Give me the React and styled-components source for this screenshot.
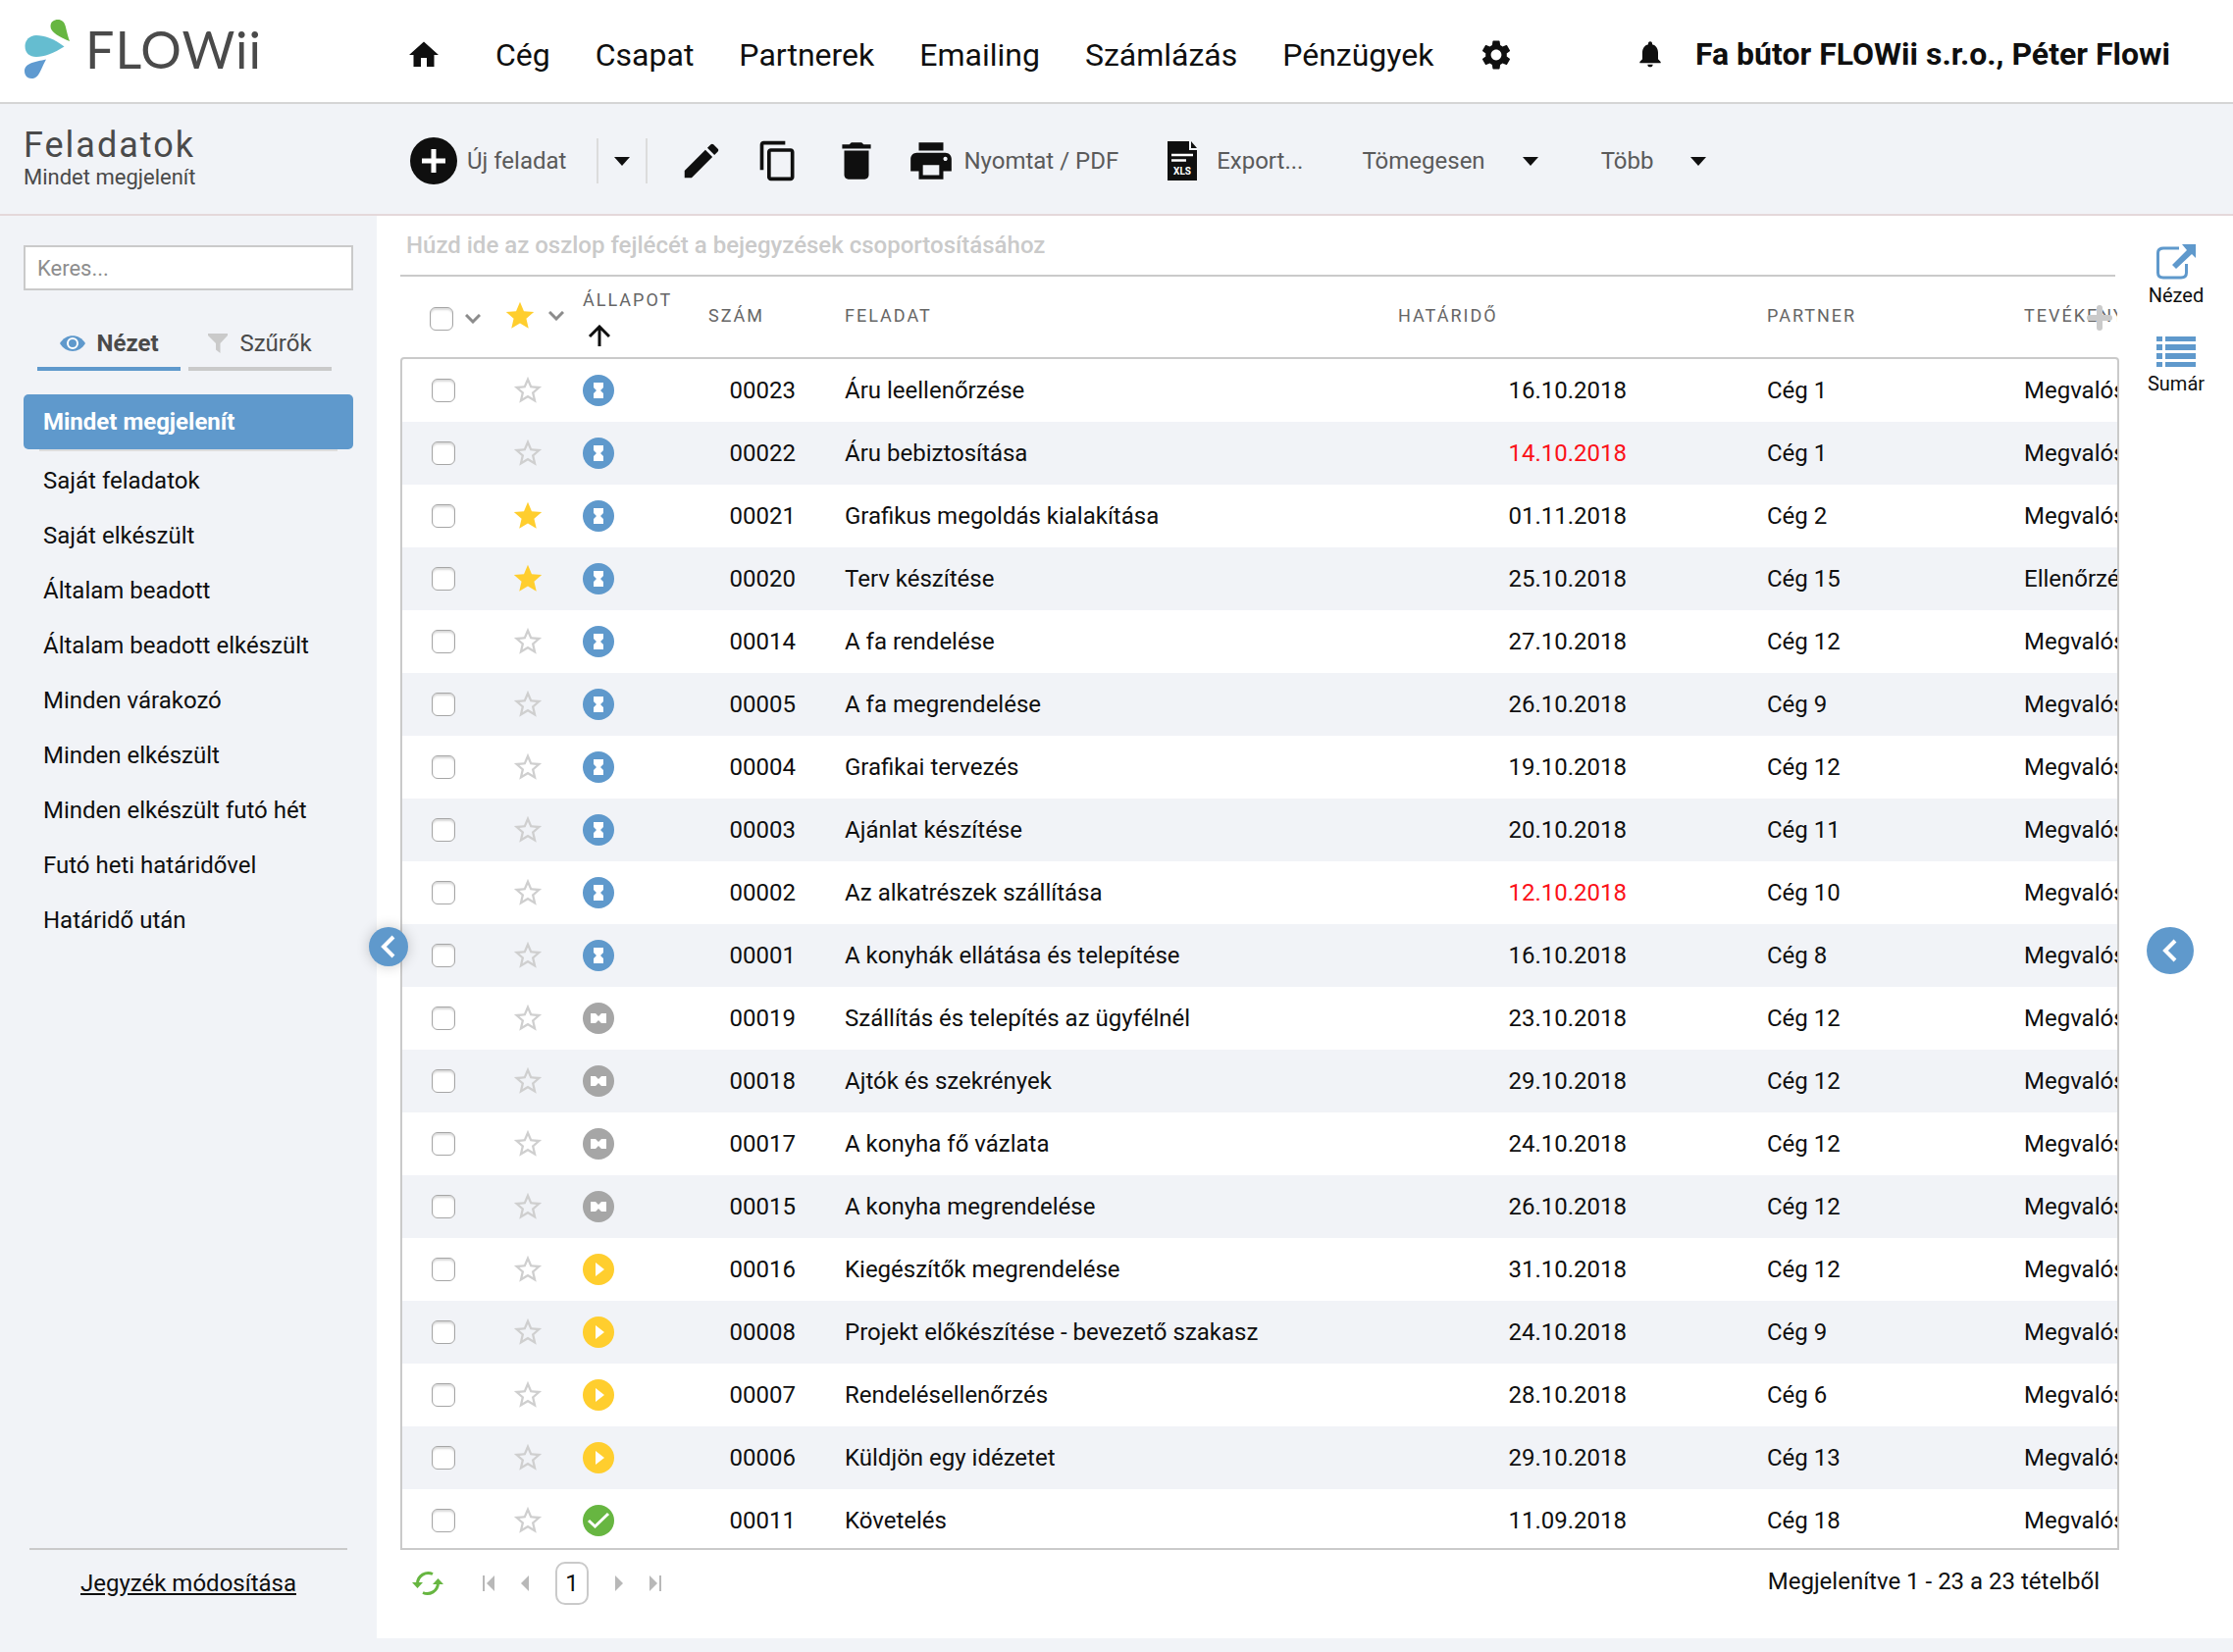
import React, { useState } from "react";
import styled, { createGlobalStyle } from "styled-components";
import {
  MdContentCopy,
  MdDelete,
  MdEdit,
  MdHome,
  MdNotifications,
  MdPrint,
  MdSettings,
  MdStar,
  MdStarBorder,
} from "react-icons/md";

const Colors = {
  blue: "#5f99cc",
  green: "#67b641",
  yellow: "#ffce2e",
  gray: "#a6a6a6",
  line: "#cacaca",
  panel: "#f1f3f7",
  text: "#0f0f0f",
  darkGray: "#4a4a4a",
  red: "#fb1018",
};

const NavItems = [
  "Cég",
  "Csapat",
  "Partnerek",
  "Emailing",
  "Számlázás",
  "Pénzügyek",
];

const Views = [
  "Mindet megjelenít",
  "Saját feladatok",
  "Saját elkészült",
  "Általam beadott",
  "Általam beadott elkészült",
  "Minden várakozó",
  "Minden elkészült",
  "Minden elkészült futó hét",
  "Futó heti határidővel",
  "Határidő után",
];

const work = "Megvalósítás";

const Tasks = [
  { id: "00023", status: "waiting", name: "Áru leellenőrzése", date: "16.10.2018", partner: "Cég 1", type: work },
  { id: "00022", status: "waiting", name: "Áru bebiztosítása", date: "14.10.2018", partner: "Cég 1", type: work, late: true },
  { id: "00021", status: "waiting", name: "Grafikus megoldás kialakítása", date: "01.11.2018", partner: "Cég 2", type: work, starred: true },
  { id: "00020", status: "waiting", name: "Terv készítése", date: "25.10.2018", partner: "Cég 15", type: "Ellenőrzés", starred: true },
  { id: "00014", status: "waiting", name: "A fa rendelése", date: "27.10.2018", partner: "Cég 12", type: work },
  { id: "00005", status: "waiting", name: "A fa megrendelése", date: "26.10.2018", partner: "Cég 9", type: work },
  { id: "00004", status: "waiting", name: "Grafikai tervezés", date: "19.10.2018", partner: "Cég 12", type: work },
  { id: "00003", status: "waiting", name: "Ajánlat készítése", date: "20.10.2018", partner: "Cég 11", type: work },
  { id: "00002", status: "waiting", name: "Az alkatrészek szállítása", date: "12.10.2018", partner: "Cég 10", type: work, late: true },
  { id: "00001", status: "waiting", name: "A konyhák ellátása és telepítése", date: "16.10.2018", partner: "Cég 8", type: work },
  { id: "00019", status: "paused", name: "Szállítás és telepítés az ügyfélnél", date: "23.10.2018", partner: "Cég 12", type: work },
  { id: "00018", status: "paused", name: "Ajtók és szekrények", date: "29.10.2018", partner: "Cég 12", type: work },
  { id: "00017", status: "paused", name: "A konyha fő vázlata", date: "24.10.2018", partner: "Cég 12", type: work },
  { id: "00015", status: "paused", name: "A konyha megrendelése", date: "26.10.2018", partner: "Cég 12", type: work },
  { id: "00016", status: "running", name: "Kiegészítők megrendelése", date: "31.10.2018", partner: "Cég 12", type: work },
  { id: "00008", status: "running", name: "Projekt előkészítése - bevezető szakasz", date: "24.10.2018", partner: "Cég 9", type: work },
  { id: "00007", status: "running", name: "Rendelésellenőrzés", date: "28.10.2018", partner: "Cég 6", type: work },
  { id: "00006", status: "running", name: "Küldjön egy idézetet", date: "29.10.2018", partner: "Cég 13", type: work },
  { id: "00011", status: "done", name: "Követelés", date: "11.09.2018", partner: "Cég 18", type: work },
];

const hourglass = "M11 8H21V13L18 16L21 19V24H11V19L14 16L11 13Z";

const StatusIcon = ({ status }) => (
  <svg width="32" height="32" viewBox="0 0 32 32">
    {status === "waiting" && (
      <>
        <circle cx="16" cy="16" r="16" fill={Colors.blue} />
        <path d={hourglass} fill="#fff" />
      </>
    )}
    {status === "paused" && (
      <>
        <circle cx="16" cy="16" r="16" fill={Colors.gray} />
        <path d={hourglass} fill="#fff" transform="rotate(90 16 16)" />
      </>
    )}
    {status === "running" && (
      <>
        <circle cx="16" cy="16" r="16" fill={Colors.yellow} />
        <path d="M13 9L22 16L13 23Z" fill="#fff" />
      </>
    )}
    {status === "done" && (
      <>
        <circle cx="16" cy="16" r="16" fill={Colors.green} />
        <path d="M6 16L12.500 22L26 9" fill="none" stroke="#fff" strokeWidth="3" />
      </>
    )}
  </svg>
);

const Star = ({ on }) =>
  on ? (
    <MdStar size={34} color={Colors.yellow} />
  ) : (
    <MdStarBorder size={34} color="#cfcfcf" />
  );

const Caret = () => (
  <svg width="16" height="9" viewBox="0 0 16 9">
    <path d="M0 0H16L8 9Z" fill={Colors.text} />
  </svg>
);

const Chevron = () => (
  <svg width="16" height="10" viewBox="0 0 16 10">
    <path d="M1 1L8 8L15 1" fill="none" stroke="#8c8c8c" strokeWidth="3" />
  </svg>
);

const ArrowLeft = ({ size }) => (
  <svg width={size} height={size} viewBox="0 0 24 24">
    <path d="M17 2L7 12L17 22" fill="none" stroke="#fff" strokeWidth="4" />
  </svg>
);

const Columns = () => (
  <colgroup>
    <col width="102" />
    <col width="70" />
    <col width="128" />
    <col width="139" />
    <col />
    <col width="376" />
    <col width="262" />
    <col width="107" />
  </colgroup>
);

export default function App() {
  const [activeView, setActiveView] = useState(Views[0]);

  return (
    <StyledApp>
      <GlobalStyle />
      <Header>
        <Brand href="#home">
          <svg width="50" height="64" viewBox="23 18 50 64">
            <path
              d="M71 42C61 38 51.500 33 51.500 27C51.500 22 55 20 59 20C63 20 65.500 22.500 66.500 26C68 31 68.500 35 71 42Z"
              fill="#67b641"
            />
            <path
              d="M65.500 47.500C55 39.500 45 36 37 36C30 36 25.500 41 25.500 47C25.500 54 30 58 37 58C45 58 55 54 65.500 47.500Z"
              fill="#65bdd0"
            />
            <path
              d="M47 60.500C43 68 41 74 38.500 77C36.500 79.500 34 80 32 80C28 80 25 77 25 72.500C25 64 36 63 47 60.500Z"
              fill="#5f9ad0"
            />
          </svg>
          <BrandName>FLOWii</BrandName>
        </Brand>
        <Nav>
          <NavLink href="#home" aria-label="Home">
            <MdHome size={36} />
          </NavLink>
          <NavMenu>
            {NavItems.map((item) => (
              <NavLink key={item} href="#nav">
                {item}
              </NavLink>
            ))}
            <NavLink href="#settings" aria-label="Settings">
              <MdSettings size={36} />
            </NavLink>
          </NavMenu>
        </Nav>
        <Account>
          <IconButton aria-label="Notifications">
            <MdNotifications size={32} />
          </IconButton>
          <AccountName>Fa bútor FLOWii s.r.o., Péter Flowi</AccountName>
        </Account>
      </Header>

      <Toolbar>
        <Heading>
          <Title>Feladatok</Title>
          <Subtitle>Mindet megjelenít</Subtitle>
        </Heading>
        <Tools>
          <ToolButton $gap={10}>
            <svg width="48" height="48" viewBox="0 0 48 48">
              <circle cx="24" cy="24" r="24" fill={Colors.text} />
              <path d="M24 12V36M12 24H36" stroke="#fff" strokeWidth="5" />
            </svg>
            Új feladat
          </ToolButton>
          <SplitButton aria-label="Új feladat menü">
            <Caret />
          </SplitButton>
          <IconTools>
            <IconButton aria-label="Edit">
              <MdEdit size={46} />
            </IconButton>
            <IconButton aria-label="Copy">
              <MdContentCopy size={44} />
            </IconButton>
            <IconButton aria-label="Delete">
              <MdDelete size={50} />
            </IconButton>
          </IconTools>
          <ToolButton $gap={8}>
            <MdPrint size={50} color={Colors.text} />
            Nyomtat / PDF
          </ToolButton>
          <ToolButton $gap={20} $space={50}>
            <svg width="30" height="40" viewBox="0 0 30 40">
              <path d="M0 0H22V9H30V40H0Z" fill={Colors.text} />
              <path d="M24 0L30 7H24Z" fill={Colors.text} />
              <path d="M4 14H26M4 19.500H19" stroke="#fff" strokeWidth="2.500" />
              <text
                x="15"
                y="34"
                textAnchor="middle"
                fontFamily="Roboto, sans-serif"
                fontSize="10"
                fontWeight="700"
                fill="#fff"
              >
                XLS
              </text>
            </svg>
            Export...
          </ToolButton>
          <ToolButton $gap={38} $space={60}>
            Tömegesen
            <Caret />
          </ToolButton>
          <ToolButton $gap={38} $space={64}>
            Több
            <Caret />
          </ToolButton>
        </Tools>
      </Toolbar>

      <Content>
        <Sidebar>
          <Search type="text" placeholder="Keres..." aria-label="Keres" />
          <Tabs>
            <Tab $active>
              <svg width="26" height="16" viewBox="0 0 26 16">
                <path
                  d="M0 8C6 -2.500 20 -2.500 26 8C20 18.500 6 18.500 0 8Z"
                  fill={Colors.blue}
                />
                <circle cx="13" cy="8" r="5" fill="none" stroke="#fff" strokeWidth="2" />
              </svg>
              Nézet
            </Tab>
            <Tab>
              <svg width="20" height="20" viewBox="0 0 20 20">
                <path d="M0 0H20V2L12.500 10V20L8 16.500V10L0 2Z" fill={Colors.line} />
              </svg>
              Szűrők
            </Tab>
          </Tabs>
          <ViewList>
            {Views.map((view) => (
              <li key={view}>
                <ViewButton
                  $active={view === activeView}
                  onClick={() => setActiveView(view)}
                >
                  {view}
                </ViewButton>
              </li>
            ))}
          </ViewList>
          <SidebarFooter>
            <EditLink href="#views">Jegyzék módosítása</EditLink>
          </SidebarFooter>
          <CollapseButton aria-label="Collapse">
            <ArrowLeft size={24} />
          </CollapseButton>
        </Sidebar>

        <Main>
          <GroupHint>
            Húzd ide az oszlop fejlécét a bejegyzések csoportosításához
          </GroupHint>
          <GridHeader>
            <Table>
              <Columns />
              <thead>
                <tr>
                  <HeadCell $pad={28}>
                    <HeadTools $top={6}>
                      <Checkbox type="checkbox" aria-label="Select all" />
                      <Chevron />
                    </HeadTools>
                  </HeadCell>
                  <HeadCell $pad={1}>
                    <HeadTools>
                      <MdStar size={34} color={Colors.yellow} />
                      <Chevron />
                    </HeadTools>
                  </HeadCell>
                  <HeadCell>
                    <SortedHead>
                      ÁLLAPOT
                      <svg width="28" height="22" viewBox="0 0 28 22">
                        <path
                          d="M17 22V2M7 12L17 2L27 12"
                          fill="none"
                          stroke={Colors.text}
                          strokeWidth="3"
                        />
                      </svg>
                    </SortedHead>
                  </HeadCell>
                  <HeadCell>SZÁM</HeadCell>
                  <HeadCell>FELADAT</HeadCell>
                  <HeadCell>HATÁRIDŐ</HeadCell>
                  <HeadCell>PARTNER</HeadCell>
                  <HeadCell>TEVÉKENYSÉG</HeadCell>
                </tr>
              </thead>
            </Table>
            <AddColumn aria-label="Add column">
              <svg width="26" height="26" viewBox="0 0 26 26">
                <path
                  d="M13 3V23M3 13H23"
                  stroke={Colors.line}
                  strokeWidth="6"
                  strokeLinecap="round"
                />
              </svg>
            </AddColumn>
          </GridHeader>
          <GridBody>
            <Table>
              <Columns />
              <tbody>
                {Tasks.map((task) => (
                  <Row key={task.id}>
                    <Cell $pad={30}>
                      <Checkbox type="checkbox" aria-label={task.name} />
                    </Cell>
                    <Cell $pad={9}>
                      <Star on={task.starred} />
                    </Cell>
                    <Cell>
                      <StatusIcon status={task.status} />
                    </Cell>
                    <Cell $right={38}>{task.id}</Cell>
                    <Cell>{task.name}</Cell>
                    <Cell $right={131} $late={task.late}>
                      {task.date}
                    </Cell>
                    <Cell>{task.partner}</Cell>
                    <Cell>{task.type}</Cell>
                  </Row>
                ))}
              </tbody>
            </Table>
          </GridBody>
          <Pager>
            <PagerButton aria-label="Refresh">
              <svg width="32" height="26" viewBox="0 0 32 26">
                <path
                  d="M21 3.500A11 11 0 0 0 5.500 13M11 22.500A11 11 0 0 0 26.500 13"
                  fill="none"
                  stroke={Colors.green}
                  strokeWidth="3"
                />
                <path d="M0 12H11L5.500 18ZM21 14H32L26.500 8Z" fill={Colors.green} />
              </svg>
            </PagerButton>
            <PagerSteps>
              <PagerButton aria-label="First page">
                <svg width="12" height="16" viewBox="0 0 12 16">
                  <path d="M0 0H2V16H0ZM12 0V16L4 8Z" fill="#b8b8b8" />
                </svg>
              </PagerButton>
              <PagerButton aria-label="Previous page">
                <svg width="8" height="16" viewBox="0 0 8 16">
                  <path d="M8 0V16L0 8Z" fill="#b8b8b8" />
                </svg>
              </PagerButton>
              <PageNumber>1</PageNumber>
              <PagerButton aria-label="Next page">
                <svg width="8" height="16" viewBox="0 0 8 16">
                  <path d="M0 0V16L8 8Z" fill="#b8b8b8" />
                </svg>
              </PagerButton>
              <PagerButton aria-label="Last page">
                <svg width="12" height="16" viewBox="0 0 12 16">
                  <path d="M10 0H12V16H10ZM0 0V16L8 8Z" fill="#b8b8b8" />
                </svg>
              </PagerButton>
            </PagerSteps>
            <PagerInfo>Megjelenítve 1 - 23 a 23 tételből</PagerInfo>
          </Pager>
        </Main>

        <Aside>
          <AsideButton>
            <svg width="40" height="36" viewBox="0 0 40 36">
              <path
                d="M23 4H7Q1.500 4 1.500 9V29Q1.500 34 7 34H25Q30.500 34 30.500 29V20"
                fill="none"
                stroke={Colors.blue}
                strokeWidth="3"
              />
              <path d="M26 0H40V14L36 10L20 25L16 21L31 6Z" fill={Colors.blue} />
            </svg>
            Nézed
          </AsideButton>
          <AsideButton>
            <svg width="40" height="36" viewBox="0 0 40 36">
              <path
                d="M0 4H6V9H0ZM9 4H40V9H9ZM0 12H6V18H0ZM9 12H40V18H9ZM0 21H6V27H0ZM9 21H40V27H9ZM0 30H6V35H0ZM9 30H40V35H9Z"
                fill={Colors.blue}
              />
            </svg>
            Sumár
          </AsideButton>
          <ExpandButton aria-label="Expand">
            <ArrowLeft size={24} />
          </ExpandButton>
        </Aside>
      </Content>
    </StyledApp>
  );
}

const GlobalStyle = createGlobalStyle`
  * {
    box-sizing: border-box;
  }
  body {
    margin: 0;
    background-color: ${Colors.panel};
    color: ${Colors.text};
    font-family: Roboto, sans-serif;
    font-size: 24px;
    line-height: 28px;
  }
  svg {
    display: block;
    flex-shrink: 0;
  }
  button,
  input {
    font: inherit;
    color: inherit;
  }
`;

const StyledApp = styled.div`
  display: flex;
  flex-direction: column;
  height: 100vh;
  padding-bottom: 14px;
`;
const Header = styled.header`
  display: flex;
  align-items: center;
  height: 106px;
  flex-shrink: 0;
  background-color: #fff;
  border-bottom: 2px solid #d5d5d5;
`;
const Brand = styled.a`
  display: flex;
  align-items: center;
  gap: 14px;
  width: 384px;
  padding: 0 0 4px 23px;
  color: ${Colors.darkGray};
  text-decoration: none;
`;
const BrandName = styled.span`
  font-family: Lato, sans-serif;
  font-size: 52px;
  line-height: 64px;
  letter-spacing: 1px;
`;
const Nav = styled.nav`
  display: flex;
  align-items: center;
  gap: 55px;
  padding: 8px 0 0 30px;
`;
const NavMenu = styled.div`
  display: flex;
  align-items: center;
  gap: 46px;
`;
const NavLink = styled.a`
  color: ${Colors.text};
  font-size: 32px;
  line-height: 40px;
  text-decoration: none;
`;
const Account = styled.div`
  display: flex;
  align-items: center;
  gap: 30px;
  margin-left: auto;
  padding: 6px 64px 0 0;
`;
const AccountName = styled.strong`
  font-size: 32px;
  line-height: 40px;
  font-weight: 700;
`;
const IconButton = styled.button`
  display: flex;
  padding: 0;
  border: 0;
  background: none;
  cursor: pointer;
`;

const Toolbar = styled.div`
  display: flex;
  align-items: center;
  height: 114px;
  flex-shrink: 0;
  border-bottom: 2px solid #e4d8da;
`;
const Heading = styled.div`
  width: 418px;
  padding: 0 0 2px 24px;
  color: ${Colors.darkGray};
`;
const Title = styled.h1`
  margin: 0;
  font-size: 36px;
  line-height: 40px;
  font-weight: 400;
  letter-spacing: 2px;
`;
const Subtitle = styled.p`
  margin: 0;
  font-size: 22px;
  line-height: 26px;
`;
const Tools = styled.div`
  display: flex;
  align-items: center;
  padding-top: 4px;
`;
const ToolButton = styled.button`
  display: flex;
  align-items: center;
  gap: ${(props) => props.$gap}px;
  margin-left: ${(props) => props.$space || 0}px;
  padding: 0;
  border: 0;
  background: none;
  color: #5a5a5a;
  white-space: nowrap;
  cursor: pointer;
`;
const SplitButton = styled.button`
  display: flex;
  align-items: center;
  justify-content: center;
  width: 52px;
  height: 46px;
  margin-left: 31px;
  padding: 0;
  border: 2px solid #dcdcdc;
  border-width: 0 2px;
  background: none;
`;
const IconTools = styled.div`
  display: flex;
  align-items: center;
  gap: 33px;
  margin: 0 26px 0 32px;
`;

const Content = styled.div`
  display: flex;
  flex: 1;
  min-height: 0;
`;
const Sidebar = styled.aside`
  position: relative;
  display: flex;
  flex-direction: column;
  width: 384px;
  flex-shrink: 0;
  padding: 30px 24px 0;
`;
const Search = styled.input`
  width: 100%;
  height: 46px;
  padding: 0 12px;
  border: 2px solid ${Colors.line};
  border-radius: 0;
  background-color: #fff;
  font-size: 22px;
  &::placeholder {
    color: #8e8e8e;
    opacity: 1;
  }
`;
const Tabs = styled.div`
  display: flex;
  gap: 8px;
  margin: 30px 22px 24px 14px;
`;
const Tab = styled.button`
  display: flex;
  align-items: center;
  justify-content: center;
  gap: 12px;
  flex: 1;
  height: 52px;
  padding: 0;
  border: 0;
  border-bottom: 4px solid
    ${(props) => (props.$active ? Colors.blue : Colors.line)};
  background: none;
  color: ${Colors.darkGray};
  font-weight: ${(props) => (props.$active ? 700 : 400)};
`;
const ViewList = styled.ul`
  list-style: none;
  margin: 0;
  padding: 0;
`;
const ViewButton = styled.button`
  display: block;
  width: 100%;
  height: 56px;
  margin-bottom: ${(props) => (props.$active ? 4 : 0)}px;
  padding: 0 20px;
  border: 0;
  border-radius: 5px;
  background-color: ${(props) => (props.$active ? Colors.blue : "transparent")};
  box-shadow: ${(props) => (props.$active ? "0 18px 0 -16px #dddddd" : "none")};
  color: ${(props) => (props.$active ? "#fff" : Colors.text)};
  font-weight: ${(props) => (props.$active ? 700 : 400)};
  text-align: left;
  cursor: pointer;
`;
const SidebarFooter = styled.div`
  height: 92px;
  margin: auto 6px 0;
  padding-top: 20px;
  border-top: 2px solid ${Colors.line};
  text-align: center;
`;
const EditLink = styled.a`
  color: ${Colors.text};
`;
const RoundButton = styled.button`
  position: absolute;
  display: flex;
  align-items: center;
  justify-content: center;
  padding: 0;
  border: 0;
  border-radius: 50%;
  background-color: ${Colors.blue};
  cursor: pointer;
`;
const CollapseButton = styled(RoundButton)`
  top: 50%;
  right: -32px;
  z-index: 1;
  width: 40px;
  height: 40px;
  box-shadow: 0 0 14px rgba(0, 0, 0, 0.2);
`;
const ExpandButton = styled(RoundButton)`
  top: 50%;
  right: 40px;
  width: 48px;
  height: 48px;
`;

const Main = styled.main`
  display: flex;
  flex-direction: column;
  flex: 1;
  min-width: 0;
  padding-left: 24px;
  background-color: #fff;
`;
const GroupHint = styled.div`
  height: 62px;
  margin-right: 4px;
  padding: 16px 6px 0;
  border-bottom: 2px solid ${Colors.line};
  color: ${Colors.line};
  font-weight: 500;
`;
const GridHeader = styled.div`
  position: relative;
  padding: 0 2px;
`;
const GridBody = styled.div`
  flex: 1;
  min-height: 0;
  overflow: hidden;
  border: 2px solid ${Colors.line};
  border-radius: 4px 4px 0 0;
`;
const Table = styled.table`
  width: 100%;
  table-layout: fixed;
  border-collapse: collapse;
`;
const HeadCell = styled.th`
  height: 82px;
  padding: 0 0 2px ${(props) => props.$pad ?? 12}px;
  overflow: hidden;
  color: #666;
  font-size: 18px;
  font-weight: 400;
  letter-spacing: 2px;
  text-align: left;
  white-space: nowrap;
`;
const HeadTools = styled.div`
  display: flex;
  align-items: center;
  gap: 12px;
  padding-top: ${(props) => props.$top || 0}px;
`;
const SortedHead = styled.div`
  display: flex;
  flex-direction: column;
  gap: 14px;
  padding-top: 4px;
  line-height: 22px;
`;
const AddColumn = styled.button`
  position: absolute;
  top: 29px;
  right: 7px;
  padding: 0;
  border: 0;
  background: none;
`;
const Row = styled.tr`
  &:nth-child(even) {
    background-color: ${Colors.panel};
  }
`;
const Cell = styled.td`
  height: 64px;
  padding: 0 ${(props) => props.$right || 0}px 0 ${(props) => props.$pad ?? 12}px;
  overflow: hidden;
  color: ${(props) => (props.$late ? Colors.red : Colors.text)};
  text-align: ${(props) => (props.$right ? "right" : "left")};
  white-space: nowrap;
`;
const Checkbox = styled.input`
  display: block;
  appearance: none;
  width: 24px;
  height: 24px;
  margin: 0;
  border: 1px solid #a6a6a6;
  border-radius: 6px;
  background-color: #fff;
  box-shadow: inset 0 2px 2px rgba(0, 0, 0, 0.15);
  &:checked {
    background-color: ${Colors.blue};
  }
`;

const Pager = styled.div`
  display: flex;
  align-items: center;
  height: 90px;
  flex-shrink: 0;
  padding: 0 20px 22px 12px;
`;
const PagerSteps = styled.div`
  display: flex;
  align-items: center;
  gap: 27px;
  margin-left: 40px;
`;
const PagerButton = styled.button`
  padding: 0;
  border: 0;
  background: none;
`;
const PageNumber = styled.button`
  width: 34px;
  height: 44px;
  padding: 0;
  border: 2px solid ${Colors.line};
  border-radius: 10px;
  background: none;
`;
const PagerInfo = styled.span`
  margin-left: auto;
  padding-bottom: 4px;
`;

const Aside = styled.aside`
  position: relative;
  display: flex;
  flex-direction: column;
  align-items: center;
  gap: 26px;
  width: 116px;
  flex-shrink: 0;
  padding-top: 29px;
  background-color: #fff;
`;
const AsideButton = styled.button`
  display: flex;
  flex-direction: column;
  align-items: center;
  gap: 4px;
  padding: 0;
  border: 0;
  background: none;
  font-size: 20px;
  line-height: 24px;
`;
